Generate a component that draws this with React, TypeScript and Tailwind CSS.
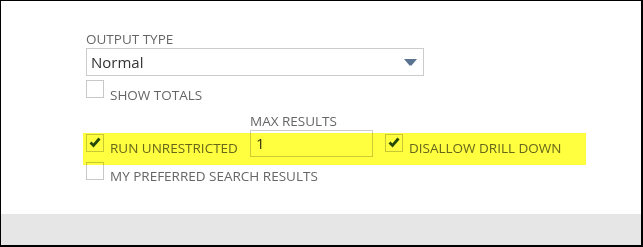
import React from "react";

const Checkbox: React.FC<{ checked?: boolean }> = ({ checked }) => {
  return (
    <div className="w-[18px] h-[18px] shrink-0 border border-[#c8c8c8] bg-transparent flex items-start justify-start">
      {checked && (
        <svg width="16" height="16" viewBox="0 0 16 16" className="block">
          <polyline
            points="3.5,7.5 6.5,10.5 12.5,3.5"
            fill="none"
            stroke="#264a0c"
            strokeWidth="2.8"
          />
        </svg>
      )}
    </div>
  );
};

interface CheckRowProps {
  label: string;
  checked?: boolean;
  textOffset?: string;
}

const CheckRow: React.FC<CheckRowProps> = ({ label, checked, textOffset = "mt-[6px]" }) => {
  return (
    <div className="flex items-start">
      <Checkbox checked={checked} />
      <span className={`ml-[6px] ${textOffset} text-[13.5px] leading-[16px] text-[#666] whitespace-nowrap`}>
        {label}
      </span>
    </div>
  );
};

export default function App() {
  return (
    <div className="relative w-[643px] h-[247px] border-l border-t border-r-2 border-b-2 border-black bg-white flex flex-col font-['Open_Sans',sans-serif]">
      <div className="flex-1 pl-[85px] pt-[30px]">
        <div className="text-[13.5px] leading-[16px] text-[#666]">OUTPUT TYPE</div>
        <div className="mt-[1px] w-[338px] h-[28px] border border-[#cccccc] flex items-center justify-between pl-[4px] pr-[6px]">
          <span className="text-[15px] leading-[26px] text-[#333]">Normal</span>
          <svg width="13" height="7" viewBox="0 0 13 7">
            <polygon points="0,0 13,0 7.5,6.5 5.5,6.5" fill="#5a7391" />
          </svg>
        </div>

        <div className="mt-[4px]">
          <CheckRow label="SHOW TOTALS" textOffset="mt-[7px]" />
        </div>

        <div className="mt-[10px] flex items-start">
          <div className="w-[164px] mt-[21px]">
            <CheckRow label="RUN UNRESTRICTED" checked />
          </div>
          <div className="flex flex-col">
            <span className="text-[13.5px] leading-[16px] text-[#666]">MAX RESULTS</span>
            <div className="mt-[1px] w-[123px] h-[27px] border border-[#cccccc] pl-[5px] text-[15px] leading-[25px] text-[#333]">
              1
            </div>
          </div>
          <div className="ml-[12px] mt-[21px]">
            <CheckRow label="DISALLOW DRILL DOWN" checked />
          </div>
        </div>

        <div className="mt-[5px]">
          <CheckRow label="MY PREFERRED SEARCH RESULTS" />
        </div>
      </div>
      <div className="h-[31px] bg-[#e6e6e6]" />

      <div className="absolute left-[82px] top-[132px] w-[503px] h-[32px] bg-[#ffff40] mix-blend-multiply pointer-events-none" />
    </div>
  );
}
